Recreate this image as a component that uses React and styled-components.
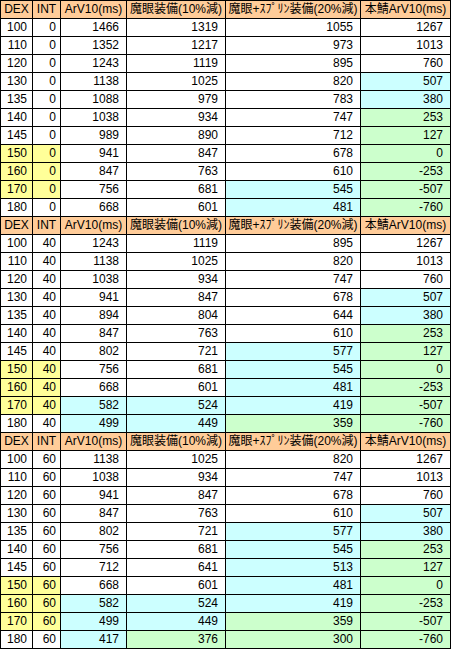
import React from "react";
import styled, { createGlobalStyle } from "styled-components";

const Global = createGlobalStyle`
  html, body {
    margin: 0;
    padding: 0;
    background: #ffffff;
  }
  body {
    font-family: "Liberation Sans", "Noto Sans CJK JP", sans-serif;
    font-size: 12px;
    color: #000000;
  }
`;

const Sheet = styled.div`
  display: grid;
  grid-template-columns: 32px 28px 66px 99px 135px 90px;
  grid-auto-rows: 18px;
  width: fit-content;
  border-left: 1px solid #000;
  border-top: 1px solid #000;
`;

const Cell = styled.div`
  box-sizing: border-box;
  display: flex;
  align-items: center;
  justify-content: ${(p) => (p.head ? "center" : "flex-end")};
  padding-right: ${(p) => (p.head ? 0 : p.pad)}px;
  border-right: 1px solid #000;
  border-bottom: 1px solid #000;
  background: ${(p) => p.bg};
  white-space: nowrap;
  overflow: hidden;
  line-height: 17px;
  font-size: 12px;
`;

const HEAD_BG = "#ffcc99";
const YELLOW = "#ffff99";
const BLUE = "#ccffff";
const GREEN = "#ccffcc";

const headers = [
  "DEX",
  "INT",
  "ArV10(ms)",
  "魔眼装備(10%減)",
  "魔眼+ｽﾌﾟﾘﾝ装備(20%減)",
  "本鯖ArV10(ms)",
];

const sections = [
  {
    int: 0,
    rows: [
      [100, 1466, 1319, 1055, 1267],
      [110, 1352, 1217, 973, 1013],
      [120, 1243, 1119, 895, 760],
      [130, 1138, 1025, 820, 507],
      [135, 1088, 979, 783, 380],
      [140, 1038, 934, 747, 253],
      [145, 989, 890, 712, 127],
      [150, 941, 847, 678, 0],
      [160, 847, 763, 610, -253],
      [170, 756, 681, 545, -507],
      [180, 668, 601, 481, -760],
    ],
  },
  {
    int: 40,
    rows: [
      [100, 1243, 1119, 895, 1267],
      [110, 1138, 1025, 820, 1013],
      [120, 1038, 934, 747, 760],
      [130, 941, 847, 678, 507],
      [135, 894, 804, 644, 380],
      [140, 847, 763, 610, 253],
      [145, 802, 721, 577, 127],
      [150, 756, 681, 545, 0],
      [160, 668, 601, 481, -253],
      [170, 582, 524, 419, -507],
      [180, 499, 449, 359, -760],
    ],
  },
  {
    int: 60,
    rows: [
      [100, 1138, 1025, 820, 1267],
      [110, 1038, 934, 747, 1013],
      [120, 941, 847, 678, 760],
      [130, 847, 763, 610, 507],
      [135, 802, 721, 577, 380],
      [140, 756, 681, 545, 253],
      [145, 712, 641, 513, 127],
      [150, 668, 601, 481, 0],
      [160, 582, 524, 419, -253],
      [170, 499, 449, 359, -507],
      [180, 417, 376, 300, -760],
    ],
  },
];

// 600未満は水色、380未満は緑
const shade = (v) => (v < 380 ? GREEN : v < 600 ? BLUE : "#ffffff");

const App = () => {
  return (
    <>
      <Global />
      <Sheet>
        {sections.map((sec) => (
          <React.Fragment key={sec.int}>
            {headers.map((h) => (
              <Cell key={`h-${sec.int}-${h}`} head bg={HEAD_BG}>
                {h}
              </Cell>
            ))}
            {sec.rows.map(([dex, ...vals]) => {
              const hl = dex >= 150 && dex <= 170 ? YELLOW : "#ffffff";
              return (
                <React.Fragment key={`${sec.int}-${dex}`}>
                  <Cell pad={5} bg={hl}>{dex}</Cell>
                  <Cell pad={4} bg={hl}>{sec.int}</Cell>
                  {vals.map((v, i) => (
                    <Cell key={i} pad={7} bg={shade(v)}>
                      {v}
                    </Cell>
                  ))}
                </React.Fragment>
              );
            })}
          </React.Fragment>
        ))}
      </Sheet>
    </>
  );
};

export default App;
